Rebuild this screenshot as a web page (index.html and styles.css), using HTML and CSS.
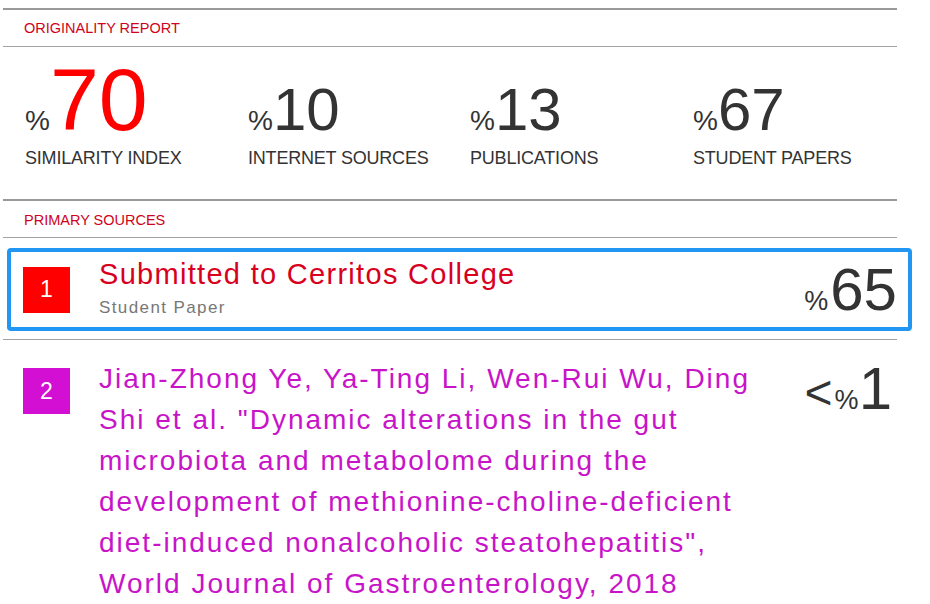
FILE: index.html
```html
<!DOCTYPE html>
<html lang="en">
<head>
<meta charset="utf-8">
<title>Originality Report</title>
<link rel="stylesheet" href="styles.css">
</head>
<body>
<div class="report">
  <div class="rule rule-thick"></div>
  <div class="section-title">ORIGINALITY REPORT</div>
  <div class="rule"></div>

  <div class="stats">
    <div class="stat-num"><span class="pct">%</span><span class="num num-main">70</span></div>
    <div class="stat-num"><span class="pct">%</span><span class="num">10</span></div>
    <div class="stat-num"><span class="pct">%</span><span class="num">13</span></div>
    <div class="stat-num"><span class="pct">%</span><span class="num">67</span></div>
    <div class="stat-label">SIMILARITY INDEX</div>
    <div class="stat-label">INTERNET SOURCES</div>
    <div class="stat-label">PUBLICATIONS</div>
    <div class="stat-label">STUDENT PAPERS</div>
  </div>

  <div class="rule rule-thick"></div>
  <div class="section-title section-title-primary">PRIMARY SOURCES</div>
  <div class="rule"></div>

  <div class="source source-active">
    <div class="rank rank-red">1</div>
    <div class="source-body">
      <div class="source-title title-red">Submitted to Cerritos College</div>
      <div class="source-type">Student Paper</div>
    </div>
    <div class="source-pct"><span class="pct-small pct-gap">%</span><span class="pct-num">65</span></div>
  </div>
  <div class="rule rule-after"></div>

  <div class="source source-long">
    <div class="rank rank-magenta">2</div>
    <div class="source-body">
      <div class="source-title title-magenta">Jian-Zhong Ye, Ya-Ting Li, Wen-Rui Wu, Ding<br>Shi et al. "Dynamic alterations in the gut<br>microbiota and metabolome during the<br>development of methionine-choline-deficient<br>diet-induced nonalcoholic steatohepatitis",<br>World Journal of Gastroenterology, 2018</div>
    </div>
    <div class="source-pct source-pct-top"><span class="lt">&lt;</span><span class="pct-small">%</span><span class="pct-num">1</span></div>
  </div>
</div>
</body>
</html>
```
FILE: styles.css
```css
* { box-sizing: border-box; }

body {
  margin: 0;
  background: #ffffff;
  font-family: "Liberation Sans", Arial, Helvetica, sans-serif;
  color: #333333;
}

.report {
  width: 894px;
  margin-left: 3px;
  padding-top: 8px;
}

.rule {
  height: 1px;
  background: #a2a2a2;
}

.rule-thick {
  height: 2px;
  background: #999999;
}

.section-title {
  height: 36px;
  padding: 10px 0 0 21px;
  font-size: 14.5px;
  line-height: 17px;
  color: #d0021b;
}

.section-title-primary {
  padding-top: 11px;
}

/* Stats */
.stats {
  height: 152px;
  display: grid;
  grid-template-columns: 223px 222px 223px 1fr;
  align-items: baseline;
  padding: 9px 0 0 22px;
  row-gap: 4px;
  align-content: start;
}

.stat-num {
  display: flex;
  align-items: baseline;
  color: #333333;
}

.pct {
  font-size: 28px;
  line-height: 1;
}

.num {
  font-size: 60px;
  line-height: 1;
}

.num-main {
  font-size: 88px;
  color: #ff0000;
}

.stat-label {
  font-size: 18px;
  line-height: 21px;
  color: #333333;
  letter-spacing: -0.2px;
}

/* Sources */
.source {
  display: flex;
  width: 905px;
  margin-left: 4px;
  border: 4px solid transparent;
  border-radius: 4px;
}

.source-active {
  margin-top: 10px;
  height: 83px;
  align-items: center;
  border-color: #2196f3;
  padding: 0 11px 0 12px;
}

.rule-after {
  margin-top: 8px;
}

.rank {
  flex: none;
  width: 47px;
  height: 46px;
  display: flex;
  align-items: center;
  justify-content: center;
  color: #ffffff;
  font-size: 23px;
}

.rank-red { background: #ff0000; }
.rank-magenta { background: #d20fd2; }

.source-body {
  flex: 1;
  margin-left: 29px;
}

.source-active .source-body {
  align-self: flex-start;
  padding-top: 6px;
}

.source-title {
  font-size: 29px;
  line-height: 33px;
  letter-spacing: 1.3px;
}

.title-red { color: #d8001e; }

.source-type {
  margin-top: 7px;
  font-size: 17px;
  line-height: 19px;
  letter-spacing: 1.4px;
  color: #777777;
}

.source-pct {
  flex: none;
  display: flex;
  align-items: baseline;
  font-size: 60px;
  line-height: 1;
  color: #333333;
}

.pct-small {
  font-size: 27px;
  line-height: 1;
}

.pct-gap {
  margin-right: 2px;
}

.pct-num {
  font-size: 60px;
  line-height: 1;
}

.lt {
  font-size: 48px;
  line-height: 1;
  margin-right: 2px;
}

.source-long {
  align-items: flex-start;
  padding: 14px 16px 0 12px;
}

.source-long .rank {
  margin-top: 10px;
}

.title-magenta {
  font-size: 28px;
  line-height: 41px;
  letter-spacing: 2px;
  color: #c814c8;
}

.source-pct-top {
  margin-top: 1px;
}
```
